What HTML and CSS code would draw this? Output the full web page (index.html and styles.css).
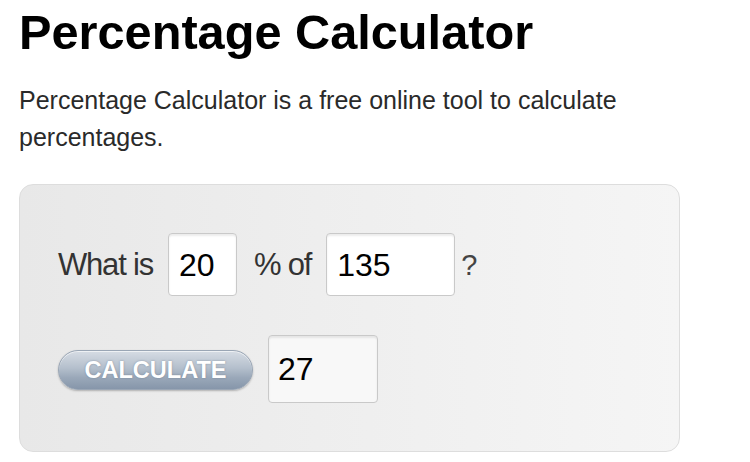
FILE: index.html
```
<!DOCTYPE html>
<html lang="en">
<head>
<meta charset="utf-8">
<title>Percentage Calculator</title>
<link rel="stylesheet" href="styles.css">
</head>
<body>
<main class="page">
  <h1 class="title">Percentage Calculator</h1>
  <p class="intro">Percentage Calculator is a free online tool to calculate percentages.</p>
  <section class="calc">
    <div class="row row-question">
      <span class="label label-what">What is</span>
      <input class="field field-pct" type="text" value="20">
      <span class="label label-of">% of</span>
      <input class="field field-base" type="text" value="135">
      <span class="label label-q">?</span>
    </div>
    <div class="row row-result">
      <button class="btn-calc" type="button">CALCULATE</button>
      <input class="field field-result" type="text" value="27" readonly>
    </div>
  </section>
</main>
</body>
</html>
```

FILE: styles.css
```
html, body {
  margin: 0;
  padding: 0;
  background: #ffffff;
}

body {
  font-family: "Liberation Sans", Arial, Helvetica, sans-serif;
  color: #000;
}

.page {
  width: 660px;
  padding: 4px 0 0 19px;
}

.title {
  margin: 0;
  font-size: 48.7px;
  line-height: 56px;
  font-weight: 700;
  color: #000;
}

.intro {
  margin: 22px 0 0;
  font-size: 25px;
  line-height: 37px;
  color: #2a2a2a;
}

.calc {
  margin-top: 28px;
  box-sizing: border-box;
  width: 661px;
  height: 268px;
  border: 1px solid #dddddd;
  border-radius: 14px;
  background: linear-gradient(90deg, #e8e8e8 0%, #eeeeee 45%, #f5f5f5 100%);
  padding: 48px 38px 0 38px;
  display: flex;
  flex-direction: column;
  gap: 39px;
}

.row {
  display: flex;
  align-items: center;
}

.row-question {
  height: 63px;
}

.row-result {
  height: 68px;
}

.label {
  font-size: 31px;
  line-height: 40px;
  color: #333333;
  letter-spacing: -1.2px;
  white-space: nowrap;
}

.label-what { margin-right: 15px; }
.label-of { margin: 0 15px 0 17px; }
.label-q { margin-left: 6px; letter-spacing: 0; font-size: 29px; color: #444; }

.field {
  box-sizing: border-box;
  height: 63px;
  border: 1px solid #c9c9c9;
  border-radius: 4px;
  background: #ffffff;
  box-shadow: inset 0 2px 2px rgba(0, 0, 0, 0.08);
  font-family: "Liberation Sans", Arial, Helvetica, sans-serif;
  font-size: 32px;
  color: #000;
  padding: 2px 0 0 10px;
  margin: 0;
  outline: none;
}

.field-pct { width: 69px; }
.field-base { width: 129px; }

.field-result {
  width: 110px;
  height: 68px;
  background: #f8f8f8;
  padding: 0 0 0 9px;
}

.btn-calc {
  box-sizing: border-box;
  width: 195px;
  height: 40px;
  margin: 2px 15px 0 0;
  border: 1px solid #9aa6b5;
  border-radius: 20px;
  background: linear-gradient(180deg, #d6dce4 0%, #b4bfcc 45%, #9aa8b9 70%, #8696aa 100%);
  box-shadow: 0 1px 2px rgba(0, 0, 0, 0.25), inset 0 1px 0 rgba(255, 255, 255, 0.6);
  font-family: "Liberation Sans", Arial, Helvetica, sans-serif;
  font-size: 23.5px;
  font-weight: 700;
  color: #ffffff;
  text-shadow: 0 0 2px rgba(90, 105, 125, 0.6);
  padding: 0;
  line-height: 38px;
}
```
